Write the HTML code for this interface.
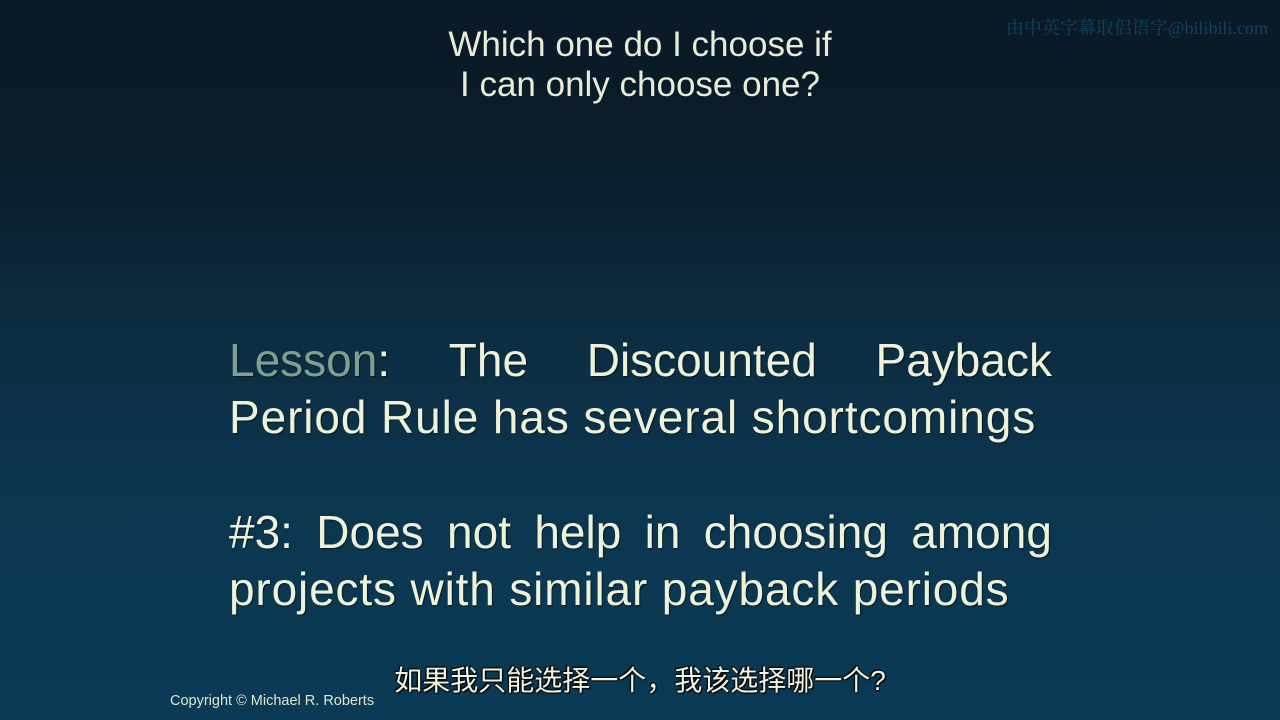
<!DOCTYPE html>
<html><head><meta charset="utf-8"><style>
html,body{margin:0;padding:0}
body{width:1280px;height:720px;overflow:hidden;position:relative;
background:linear-gradient(to bottom,#0a1a27 0%,#0a1c2a 22%,#0c2b3f 42%,#0b3650 70%,#0a3a56 100%);
font-family:"Liberation Sans",sans-serif;}
.t{position:absolute;color:#eef2d8;white-space:nowrap}
.top{left:0;width:1280px;text-align:center;font-size:35px;color:#e8ecd8}
.big{font-size:46px;left:229px;text-shadow:1px 1px 1px rgba(0,0,0,.5)}
.j{display:flex;justify-content:space-between;width:823px}
.ls{color:#7fa090}
.wm{position:absolute;right:12px;top:14px;font-size:18px;color:#0e4560;font-family:"Liberation Serif","Noto Serif CJK SC",serif}
.cn{position:absolute;left:0;width:1280px;top:659px;text-align:center;font-size:28px;color:#f4f4e0;
font-family:"Liberation Sans","Noto Sans CJK SC",sans-serif;text-shadow:0 0 2px #000,1px 1px 1px #000,-1px -1px 1px #000}
.cp{position:absolute;left:170px;top:693px;font-size:14.5px;color:#dfe6cc}
</style></head><body>
<div class="wm">由中英字幕取侣语字@bilibili.com</div>
<div class="t top" style="top:25px">Which one do I choose if</div>
<div class="t top" style="top:65px">I can only choose one?</div>
<div class="t big j" style="top:333px"><span><span class="ls">Lesson</span>:</span><span>The</span><span>Discounted</span><span>Payback</span></div>
<div class="t big" style="top:390px;letter-spacing:0.9px">Period Rule has several shortcomings</div>
<div class="t big j" style="top:505px"><span>#3:</span><span>Does</span><span>not</span><span>help</span><span>in</span><span>choosing</span><span>among</span></div>
<div class="t big" style="top:562px;letter-spacing:0.85px">projects with similar payback periods</div>
<div class="cn">如果我只能选择一个，我该选择哪一个?</div>
<div class="cp">Copyright © Michael R. Roberts</div>
</body></html>
